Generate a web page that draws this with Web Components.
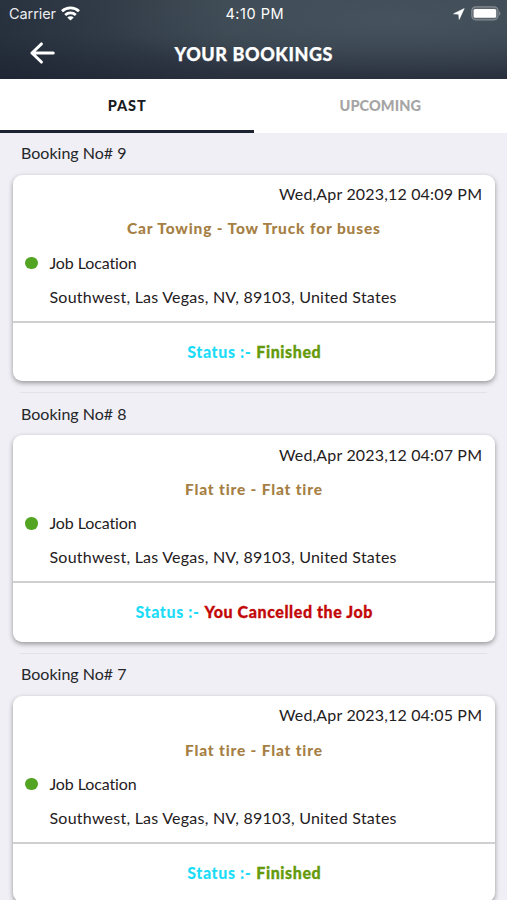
<!DOCTYPE html>
<html lang="en">
<head>
<meta charset="utf-8">
<title>Your Bookings</title>
<style>
html,body{margin:0;height:100%;overflow:hidden}
body{background:#f0eff5;font-family:Lato,"Open Sans",sans-serif;font-size:16px;color:#25262a}
</style>
</head>
<body>
<bookings-app></bookings-app>
<script>
const define = (name, html, setup) => customElements.define(name, class extends HTMLElement {
  connectedCallback() {
    if (this.shadowRoot) return;
    const t = document.createElement('template');
    t.innerHTML = html;
    this.attachShadow({ mode: 'open' }).appendChild(t.content.cloneNode(true));
    if (setup) setup(this, this.shadowRoot);
  }
});

// A single line of text, tracked so that it fills the width in its "w" attribute.
define('fit-text', `
<style>:host{display:inline-block;white-space:nowrap;flex:none}span{display:inline-block;white-space:pre}</style>
<span></span>`, (el, root) => {
  const s = root.querySelector('span');
  s.textContent = el.getAttribute('text');
  const ls = (Number(el.getAttribute('w')) - s.getBoundingClientRect().width) / (s.textContent.length - 1);
  s.style.letterSpacing = ls + 'px';
  s.style.marginRight = -ls + 'px';
});

define('status-bar', `
<style>
:host{display:grid;grid-template-columns:1fr auto 1fr;align-items:center;height:28px;padding:0 6px 0 9px;font:15px/28px Inter,"Liberation Sans",sans-serif;color:#e9ecef}
.l{display:flex;align-items:center;gap:5px}
.c{color:#fff;font-size:14.5px;margin-right:1px}
.r{display:flex;align-items:center;justify-content:flex-end;gap:6px;padding-bottom:1px}
svg{display:block}
.l svg{margin-bottom:2px}
.l fit-text{font-size:14.5px}
</style>
<div class="l"><fit-text text="Carrier" w="47"></fit-text>
<svg width="19" height="15" viewBox="0 0 19 15" fill="none" stroke="#fff" stroke-width="2.7"><path d="M1 5.3C5.7.8 13.3.8 18 5.3M4.2 8.9c3-2.8 7.6-2.8 10.6 0"/><path d="M9.5 14.6 6.3 11.5c1.8-1.6 4.6-1.6 6.4 0z" fill="#fff" stroke="none"/></svg></div>
<div class="c"><fit-text text="4:10 PM" w="58"></fit-text></div>
<div class="r">
<svg width="12" height="12" viewBox="0 0 12 12"><path d="M11.2.6.6 5.8l5.1.4.5 5.2z" fill="#fff" stroke="#fff" stroke-width=".6" stroke-linejoin="round"/></svg>
<svg width="30" height="15" viewBox="0 0 30 15"><rect x=".8" y=".8" width="26.2" height="13" rx="4" fill="#5b636c" stroke="#848b92" stroke-width="1.2"/><rect x="2.6" y="2.9" width="22.6" height="8.9" rx="1.6" fill="#fff"/><path d="M28.1 5.2c1.7.7 1.7 3.9 0 4.6z" fill="#848b92"/></svg>
</div>`);

define('nav-bar', `
<style>
:host{display:grid;grid-template-columns:1fr auto 1fr;align-items:center;height:48px;padding:0 29px 0 29px;color:#fff;font-weight:900;font-size:18px;line-height:48px}
svg{display:block}
fit-text{-webkit-text-stroke:.25px #fff;padding-top:2px}
</style>
<svg width="27" height="24" viewBox="0 0 27 24" fill="none" stroke="#fff" stroke-width="3.1" stroke-linecap="round" stroke-linejoin="round"><path d="M24.2 12H3M12.4 3 3 12l9.4 9"/></svg>
<fit-text text="YOUR BOOKINGS" w="158"></fit-text>`);

define('app-header', `
<style>
:host{display:block;height:79px;background:radial-gradient(ellipse 300px 60px at 78% 25%,rgba(76,91,102,.6),rgba(76,91,102,0)),linear-gradient(90deg,rgba(20,27,42,.5),rgba(20,27,42,0) 45%),linear-gradient(#3d4852,#3a4650 45%,#292f3d)}
</style>
<status-bar></status-bar><nav-bar></nav-bar>`);

define('tab-item', `
<style>
:host{display:flex;flex:1;justify-content:center;line-height:52px;padding-top:1px;border-bottom:3px solid #fff;color:#a5a5a5;font-weight:900;font-size:14.5px;box-sizing:content-box}
:host([active]){color:#191b22;border-bottom-color:#1d2330}
</style>
<slot></slot>`);

define('tab-bar', `
<style>:host{display:flex;height:54px;background:#fff}tab-item{height:50px}</style>
<tab-item active><fit-text text="PAST" w="38"></fit-text></tab-item>
<tab-item><fit-text text="UPCOMING" w="81.5"></fit-text></tab-item>`);

define('booking-card', `
<style>
:host{display:block;height:260.6px}
.no{height:41.5px;line-height:39px;padding-left:21px}
.card{box-sizing:border-box;height:206.5px;margin:0 12px 0 13px;background:#fff;border-radius:9px;box-shadow:0 2px 5px rgba(0,0,0,.38);display:flex;flex-direction:column}
.top{height:148px;box-sizing:border-box;padding:2.8px 13px 0 12px;border-bottom:2px solid #d0d0d2;color:#1f2022;display:grid;grid-template-rows:repeat(4,34.2px);line-height:34px}
.date{text-align:right}
.title{text-align:center;color:#a67f45;font-weight:900;font-size:15.5px}
.loc{display:flex;align-items:center;gap:12px}
.dot{width:12.5px;height:12.5px;border-radius:50%;background:#54a424}
.addr{padding-left:24.5px}
.status{flex:1;display:flex;justify-content:center;gap:5.5px;line-height:57px;font-weight:900;font-size:16px;color:#1cdcf8}
.val{-webkit-text-stroke:.3px currentColor}
.sep{height:1px;margin:11px 20px 0;background:#e3e2e8}
</style>
<div class="no"></div>
<div class="card"><div class="top"><div class="date"></div><div class="title"></div>
<div class="loc"><span class="dot"></span><fit-text text="Job Location" w="87.5"></fit-text></div>
<div class="addr"><fit-text text="Southwest, Las Vegas, NV, 89103, United States" w="347"></fit-text></div></div>
<div class="status"><fit-text text="Status :-" w="63.5"></fit-text><span class="val"></span></div></div>
<div class="sep"></div>`, (el, root) => {
  const put = (sel, text, w) => {
    const f = document.createElement('fit-text');
    f.setAttribute('text', text);
    f.setAttribute('w', w);
    root.querySelector(sel).appendChild(f);
  };
  const cancelled = el.getAttribute('state') === 'cancelled';
  put('.no', 'Booking No# ' + el.getAttribute('no'), 105.5);
  put('.date', 'Wed,Apr 2023,12 ' + el.getAttribute('time') + ' PM', 203);
  put('.title', el.getAttribute('job'), el.getAttribute('job').startsWith('Car') ? 253 : 137.5);
  root.querySelector('.val').style.color = cancelled ? '#c30808' : '#659a0c';
  put('.val', cancelled ? 'You Cancelled the Job' : 'Finished', cancelled ? 168 : 64.5);
});

define('bookings-app', `
<style>:host{display:block;height:900px;overflow:hidden;background:#f0eff5}</style>
<app-header></app-header><tab-bar></tab-bar>
<booking-card no="9" time="04:09" job="Car Towing - Tow Truck for buses" state="finished"></booking-card>
<booking-card no="8" time="04:07" job="Flat tire - Flat tire" state="cancelled"></booking-card>
<booking-card no="7" time="04:05" job="Flat tire - Flat tire" state="finished"></booking-card>`);
</script>
</body>
</html>
